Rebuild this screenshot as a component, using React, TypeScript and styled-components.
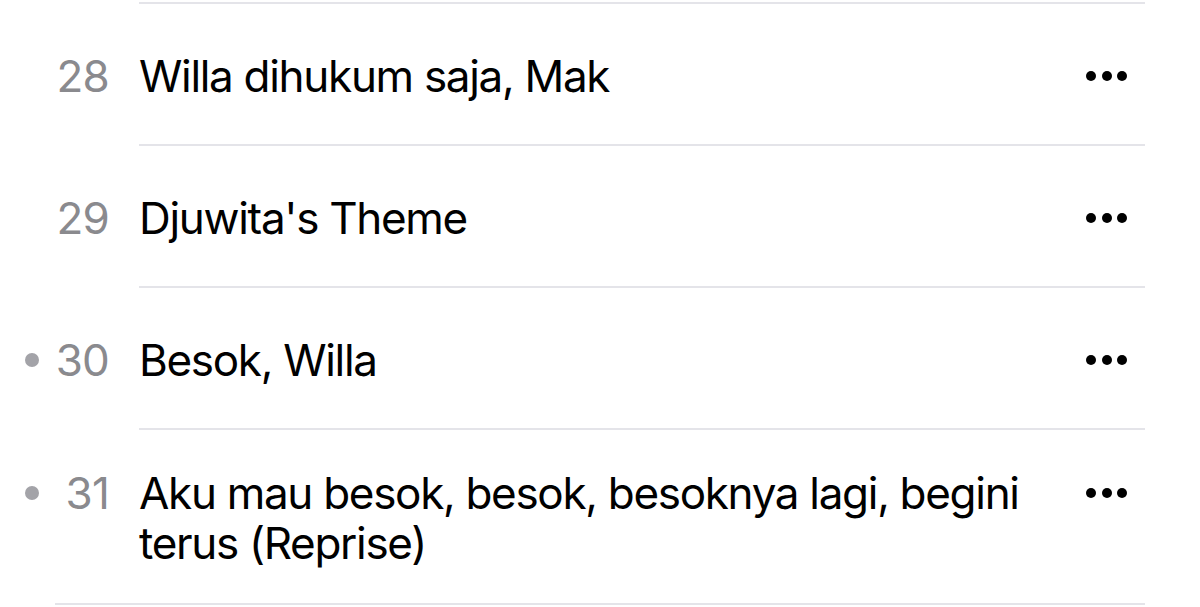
import styled, { createGlobalStyle } from "styled-components"

const GlobalStyle = createGlobalStyle`
  html, body {
    margin: 0;
    padding: 0;
    background: #ffffff;
  }
  body {
    font-family: Inter, "Liberation Sans", Arial, sans-serif;
    -webkit-font-smoothing: antialiased;
  }
`

const List = styled.div`
  width: 1200px;
  height: 607px;
  overflow: hidden;
  padding-top: 2px;
  box-sizing: border-box;
`

const Separator = styled.div<{ $inset: number }>`
  height: 2px;
  background: #e4e4e9;
  margin-left: ${p => p.$inset}px;
  margin-right: 55px;
`

const Row = styled.div<{ $multi: boolean }>`
  display: grid;
  grid-template-columns: 139px 1fr;
  --align: ${p => (p.$multi ? "flex-start" : "center")};
`

const Lead = styled.div`
  display: grid;
  grid-template-columns: 44px 1fr;
  align-content: var(--align);
  min-height: 142px;
  box-sizing: border-box;
  padding: 38px 0 37px;
`

const DotCell = styled.div`
  height: 50px;
  display: flex;
  align-items: center;
  padding-left: 25px;
`

const Dot = styled.span`
  width: 14px;
  height: 14px;
  border-radius: 50%;
  background: #a3a3a8;
`

const Number = styled.span`
  font-size: 44px;
  line-height: 50px;
  color: #8a8a8e;
  text-align: right;
  padding-right: 30px;
  letter-spacing: -0.8px;
`

const Main = styled.div<{ $border: boolean }>`
  display: flex;
  align-items: var(--align);
  gap: 24px;
  min-height: 142px;
  box-sizing: border-box;
  padding: 38px 18px 35px 0;
  margin-right: 55px;
  border-bottom: ${p => (p.$border ? "2px solid #e4e4e9" : "none")};
`

const Title = styled.div`
  flex: 1;
  font-size: 44px;
  line-height: 50px;
  color: #000000;
  letter-spacing: -1.3px;
`

const More = styled.button`
  display: flex;
  align-items: center;
  gap: 5.5px;
  height: 50px;
  padding: 0;
  border: none;
  background: none;
  span {
    width: 10px;
    height: 10px;
    border-radius: 50%;
    background: #000;
  }
`

const tracks = [
  { n: 28, title: "Willa dihukum saja, Mak", played: false },
  { n: 29, title: "Djuwita's Theme", played: false },
  { n: 30, title: "Besok, Willa", played: true },
  { n: 31, title: "Aku mau besok, besok, besoknya lagi, begini terus (Reprise)", played: true },
]

export default function App() {
  return (
    <>
      <GlobalStyle />
      <List>
        <Separator $inset={139} />
        {tracks.map((t, i) => {
          const last = i === tracks.length - 1
          return (
            <Row key={t.n} $multi={last}>
              <Lead>
                <DotCell>{t.played && <Dot />}</DotCell>
                <Number>{t.n}</Number>
              </Lead>
              <Main $border={!last}>
                <Title>{t.title}</Title>
                <More aria-label="more">
                  <span />
                  <span />
                  <span />
                </More>
              </Main>
            </Row>
          )
        })}
        <Separator $inset={55} />
      </List>
    </>
  )
}
